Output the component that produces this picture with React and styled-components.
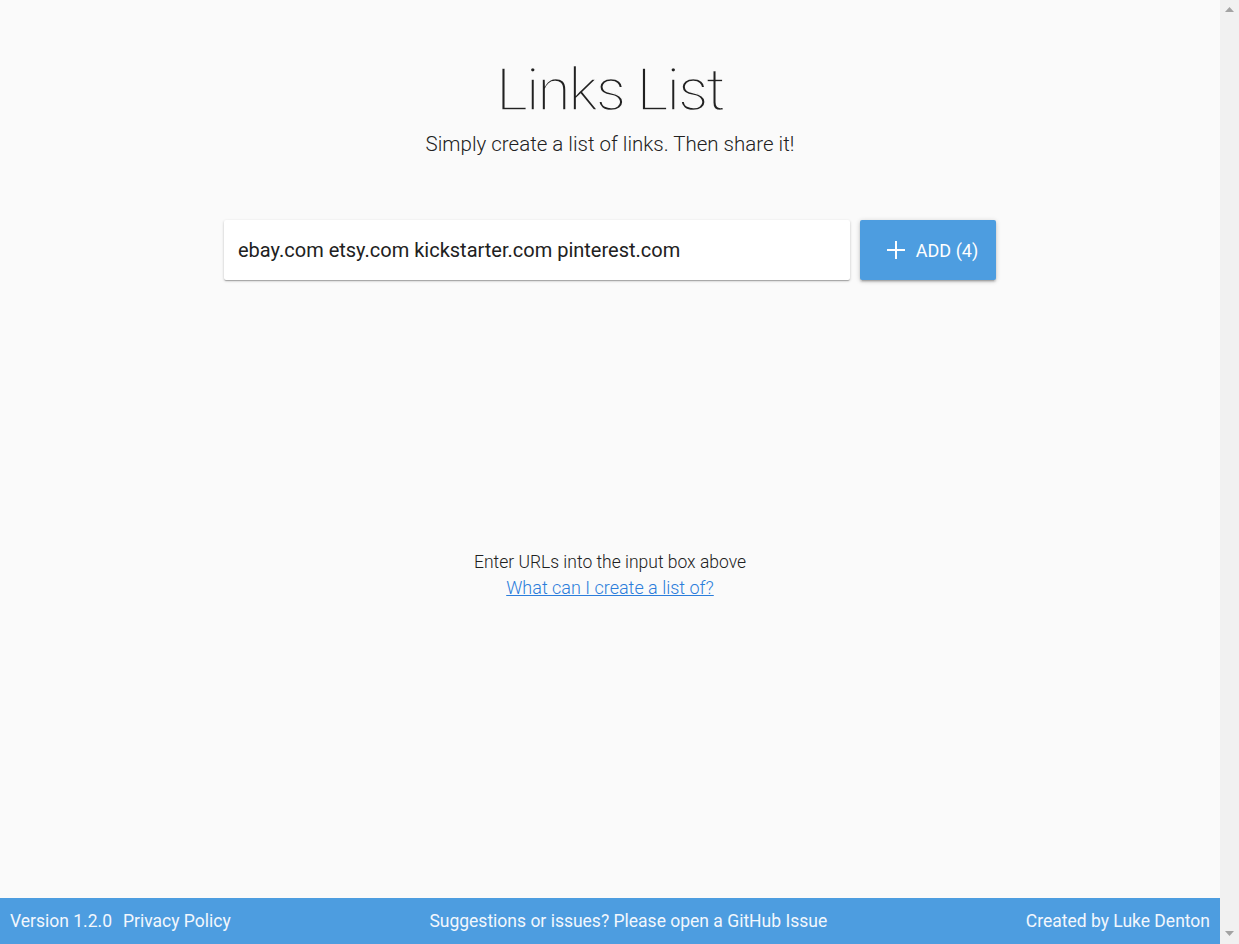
import React, { useState } from "react";
import styled, { createGlobalStyle } from "styled-components";

const GlobalStyle = createGlobalStyle`
  body {
    margin: 0;
    background: #fafafa;
    font-family: Roboto, "Liberation Sans", sans-serif;
    color: #212121;
  }
  * {
    box-sizing: border-box;
  }
`;

const Window = styled.div`
  display: flex;
  height: 100vh;
`;

const Page = styled.div`
  flex: 1;
  min-width: 0;
  display: flex;
  flex-direction: column;
`;

const Scrollbar = styled.div`
  width: 19px;
  flex-shrink: 0;
  display: flex;
  flex-direction: column;
  justify-content: space-between;
  align-items: center;
  padding: 7px 0 8px;
  background: #f1f1f1;
`;

const Main = styled.main`
  flex: 1;
  display: flex;
  flex-direction: column;
  align-items: center;
  padding-top: 54px;
`;

const Title = styled.h1`
  margin: 0;
  font-family: "Roboto Light", Roboto, "Liberation Sans", sans-serif;
  font-size: 60px;
  font-weight: 300;
  line-height: 72px;
  letter-spacing: -2px;
  color: #212121;
  -webkit-text-stroke: 1.4px #fafafa;
`;

const Subtitle = styled.p`
  margin: 2px 0 0;
  font-size: 20.5px;
  font-weight: 300;
  line-height: 32px;
  color: #212121;
`;

const Form = styled.form`
  display: flex;
  gap: 10px;
  margin-top: 60px;
`;

const UrlInput = styled.input`
  width: 626px;
  height: 60px;
  padding: 0 14px;
  border: none;
  border-radius: 2px;
  background: #fff;
  font-family: Roboto, "Liberation Sans", sans-serif;
  font-size: 20px;
  color: #212121;
  box-shadow: 0 1px 3px rgba(0, 0, 0, 0.2), 0 1px 1px rgba(0, 0, 0, 0.14),
    0 2px 1px -1px rgba(0, 0, 0, 0.12);
  outline: none;
`;

const AddButton = styled.button`
  display: flex;
  align-items: center;
  justify-content: center;
  gap: 11px;
  width: 136px;
  height: 60px;
  padding: 0 0 0 9px;
  border: none;
  border-radius: 2px;
  background: #4d9de0;
  color: #fff;
  font-family: Roboto, "Liberation Sans", sans-serif;
  font-size: 18px;
  font-weight: 400;
  text-transform: uppercase;
  cursor: pointer;
  box-shadow: 0 1px 5px rgba(0, 0, 0, 0.2), 0 2px 2px rgba(0, 0, 0, 0.14),
    0 3px 1px -2px rgba(0, 0, 0, 0.12);
`;

const Empty = styled.div`
  margin-top: 269px;
  text-align: center;
  font-size: 17.5px;
  font-weight: 300;
  line-height: 26px;
  color: #212121;
`;

const HelpLink = styled.a`
  display: block;
  font-size: 18px;
  color: #2b7ddb;
  text-decoration: underline;
  cursor: pointer;
`;

const Footer = styled.footer`
  height: 46px;
  display: flex;
  align-items: center;
  justify-content: space-between;
  padding: 0 10px;
  background: #4d9de0;
  color: #f2f7fd;
  font-size: 17.5px;
`;

const FooterGroup = styled.div`
  display: flex;
  gap: 11px;
`;

const FooterLink = styled.a`
  color: inherit;
  text-decoration: none;
`;

const PlusIcon = () => (
  <svg width="18" height="18" viewBox="0 0 18 18">
    <path d="M9 0v18M0 9h18" stroke="#fff" strokeWidth="2" />
  </svg>
);

const Arrow = ({ down }) => (
  <svg width="9" height="5" viewBox="0 0 9 5">
    <path d={down ? "M0 0h9L4.5 5z" : "M0 5h9L4.5 0z"} fill="#a3a3a3" />
  </svg>
);

const App = () => {
  const [urls, setUrls] = useState(
    "ebay.com etsy.com kickstarter.com pinterest.com"
  );
  const count = urls.split(/\s+/).filter(Boolean).length;

  return (
    <Window>
      <GlobalStyle />
      <Page>
        <Main>
          <Title>Links List</Title>
          <Subtitle>Simply create a list of links. Then share it!</Subtitle>
          <Form onSubmit={(e) => e.preventDefault()}>
            <UrlInput
              type="text"
              value={urls}
              onChange={(e) => setUrls(e.target.value)}
            />
            <AddButton type="submit">
              <PlusIcon />
              Add ({count})
            </AddButton>
          </Form>
          <Empty>
            Enter URLs into the input box above
            <HelpLink>What can I create a list of?</HelpLink>
          </Empty>
        </Main>
        <Footer>
          <FooterGroup>
            <span>Version 1.2.0</span>
            <FooterLink>Privacy Policy</FooterLink>
          </FooterGroup>
          <FooterLink>Suggestions or issues? Please open a GitHub Issue</FooterLink>
          <span>Created by Luke Denton</span>
        </Footer>
      </Page>
      <Scrollbar>
        <Arrow />
        <Arrow down />
      </Scrollbar>
    </Window>
  );
};

export default App;
